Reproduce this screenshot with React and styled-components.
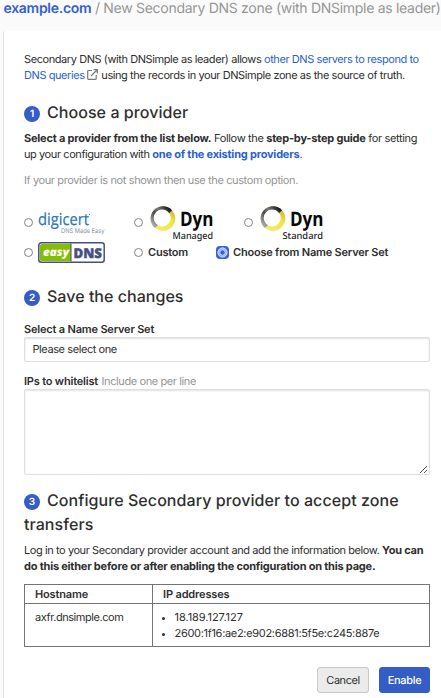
import React from "react";
import styled, { createGlobalStyle } from "styled-components";

const GlobalStyle = createGlobalStyle`
  * { box-sizing: border-box; }
  body {
    margin: 0;
    background: #fafafa;
    color: #2e2e2e;
    font: 11px/16px Inter, "Liberation Sans", sans-serif;
    letter-spacing: -0.42px;
    text-rendering: geometricPrecision;
    overflow: hidden;
  }
  b {
    letter-spacing: -0.21px;
  }
`;

const Page = styled.div`
  width: 441px;
  height: 698px;
  display: flex;
  flex-direction: column;
  overflow: hidden;
`;

const TitleBar = styled.header`
  height: 31px;
  flex: none;
  padding: 0 0 0 3.5px;
  font-size: 14px;
  line-height: 18px;
  letter-spacing: -0.29px;
  color: #969696;
  white-space: nowrap;
`;

const SiteLink = styled.a`
  color: #3360cc;
  font-weight: 600;
`;

const Card = styled.main`
  flex: 1;
  margin-left: 3px;
  padding: 20px 11px 0 20px;
  border-left: 1px solid #e2e2e2;
  border-top-left-radius: 3px;
  background: #fff;
`;

const Copy = styled.p`
  margin: 0 0 ${(p) => p.$after || 0}px;
  color: ${(p) => (p.$muted ? "#949494" : "inherit")};
`;

const Line = styled.span`
  display: block;
  height: 16px;
  white-space: nowrap;
  letter-spacing: ${(p) => p.$track || -0.42}px;
`;

const Link = styled.a`
  color: #2b5fd0;
`;

const ExternalIcon = styled.svg`
  width: 11px;
  height: 11px;
  margin: 0 3px 0 0;
  vertical-align: -1px;
`;

const Heading = styled.h2`
  margin: 0 0 ${(p) => p.$after || 6}px;
  font-size: 16px;
  line-height: 24px;
  font-weight: 500;
  letter-spacing: ${(p) => p.$track || 0}px;
  white-space: nowrap;
`;

const Step = styled.span`
  display: inline-flex;
  align-items: center;
  justify-content: center;
  width: 16px;
  height: 16px;
  margin-right: 7px;
  border-radius: 50%;
  background: #355dc6;
  color: #fff;
  font-size: 10px;
  line-height: 16px;
  font-weight: 600;
  letter-spacing: 0;
  vertical-align: 1.5px;
`;

const Providers = styled.div`
  display: grid;
  grid-template-columns: 110px 82px 28px 1fr;
  grid-template-rows: 36px 22px;
  height: 79px;
  align-content: start;
`;

const Option = styled.label`
  display: flex;
  align-items: ${(p) => (p.$top ? "flex-start" : "center")};
  font-weight: 600;
  letter-spacing: -0.21px;
  white-space: nowrap;
  grid-column: ${(p) => p.$col};
`;

const Radio = styled.span`
  flex: none;
  width: 9px;
  height: 9px;
  margin: ${(p) => p.$top || 0}px 5px 0 0;
  border: 1px solid #828282;
  border-radius: 50%;
  background: #fff;
`;

const Logo = styled.svg`
  flex: none;
  overflow: visible;
  letter-spacing: 0;
  margin-right: ${(p) => p.$gap || 0}px;
`;

const Label = styled.label`
  display: block;
  height: 16px;
  font-weight: 600;
  letter-spacing: -0.19px;
`;

const Hint = styled.span`
  margin-left: 1px;
  font-weight: 400;
  letter-spacing: -0.4px;
  color: #949494;
`;

const Field = styled.div`
  height: 25px;
  margin-bottom: 11px;
  padding: 3px 7.5px;
  border: 1px solid #dfdfdf;
  border-radius: 2px;
  box-shadow: inset 0 1px 2px rgba(0, 0, 0, 0.12);
`;

const TextBox = styled.div`
  display: flex;
  align-items: flex-end;
  justify-content: flex-end;
  height: 86px;
  margin-bottom: 13px;
  border: 1px solid #dfdfdf;
  border-radius: 2px;
  box-shadow: inset 0 1px 2px rgba(0, 0, 0, 0.12);
`;

const Table = styled.div`
  display: grid;
  grid-template-columns: 127px 1fr;
  grid-template-rows: 18px 42px;
  gap: 1px;
  padding: 1px;
  margin-top: 10px;
  background: #747474;
`;

const Cell = styled.div`
  padding: ${(p) => (p.$head ? "1px 10px 0" : "5px 10px 0")};
  background: #fff;
  font-weight: ${(p) => (p.$head ? 600 : 400)};
  letter-spacing: ${(p) => (p.$head ? -0.15 : -0.44)}px;
  white-space: nowrap;
`;

const Addresses = styled.ul`
  margin: 0;
  padding: 0;
  list-style: none;
`;

const Address = styled.li`
  display: flex;
  align-items: center;
  height: 16px;
  margin-left: -1.5px;
  letter-spacing: ${(p) => p.$track || 0}px;
  &::before {
    content: "";
    width: 3px;
    height: 3px;
    margin: 2px 10px 0 0;
    border-radius: 50%;
    background: #2e2e2e;
  }
`;

const Actions = styled.div`
  display: flex;
  justify-content: flex-end;
  gap: 10px;
  margin-top: 20px;
`;

const Button = styled.button`
  width: ${(p) => (p.$primary ? 51 : 52)}px;
  height: 26px;
  padding: 0;
  border: 1px solid ${(p) => (p.$primary ? "#355dc6" : "#c9c9c9")};
  border-radius: 3px;
  background: ${(p) => (p.$primary ? "#355dc6" : "#ebebeb")};
  color: ${(p) => (p.$primary ? "#fff" : "#2e2e2e")};
  font: ${(p) => (p.$primary ? 500 : 400)} 11px/16px Inter, sans-serif;
  letter-spacing: ${(p) => (p.$primary ? -0.3 : -0.45)}px;
  text-rendering: geometricPrecision;
`;

const DynLogo = ({ id, name }) => (
  <Logo width="65" height="36" viewBox="0 0 65 36">
    <defs>
      <linearGradient id={`${id}-dark`} x1="0.1" y1="0.8" x2="0.9" y2="0.1">
        <stop offset="0" stopColor="#a5a5a5" />
        <stop offset="0.35" stopColor="#4a4a4a" />
        <stop offset="0.6" stopColor="#777" />
        <stop offset="1" stopColor="#111" />
      </linearGradient>
      <linearGradient id={`${id}-light`} x1="1" y1="0" x2="0" y2="1">
        <stop offset="0" stopColor="#a39a3c" />
        <stop offset="0.35" stopColor="#f0e344" />
        <stop offset="1" stopColor="#f4ef80" />
      </linearGradient>
    </defs>
    <circle cx="15" cy="13.6" r="12.3" fill={`url(#${id}-light)`} />
    <path d="M24 5.2A12.3 12.3 0 1 0 7 22.9Z" fill={`url(#${id}-dark)`} />
    <circle cx="14.2" cy="13" r="8.5" fill="#fff" />
    <text x="32" y="21.3" textLength="33.5" lengthAdjust="spacingAndGlyphs" fontFamily="Open Sans" fontSize="20" fontWeight="700" fill="#080808">Dyn</text>
    <text x="24.5" y="34.3" textLength="40.5" lengthAdjust="spacingAndGlyphs" fontFamily="Noto Sans" fontSize="9.5" fontWeight="500" fill="#222">{name}</text>
  </Logo>
);

export default function App() {
  return (
    <>
      <GlobalStyle />
      <Page>
        <TitleBar><SiteLink>example.com</SiteLink> / New Secondary DNS zone (with DNSimple as leader)</TitleBar>
        <Card>
          <Copy $after={17}>
            <Line>Secondary DNS (with DNSimple as leader) allows <Link>other DNS servers to respond to</Link></Line>
            <Line>
              <Link>DNS queries</Link>{" "}
              <ExternalIcon viewBox="0 0 11 11" fill="none" stroke="#777" strokeWidth="1.2">
                <path d="M5 1.5H1.4Q.7 1.5.7 2.2V9.5Q.7 10.3 1.4 10.3H8.5Q9.2 10.3 9.2 9.5V6M4 7L10 1M6.6.7H10.3V4.4" />
              </ExternalIcon>
              using the records in your DNSimple zone as the source of truth.
            </Line>
          </Copy>

          <Heading $track={0.06}><Step>1</Step>Choose a provider</Heading>
          <Copy $after={10}>
            <Line $track={-0.36}><b>Select a provider from the list below.</b> Follow the <b>step-by-step guide</b> for setting</Line>
            <Line>up your configuration with <Link><b>one of the existing providers</b></Link>.</Line>
          </Copy>
          <Copy $muted $after={17}><Line $track={-0.39}>If your provider is not shown then use the custom option.</Line></Copy>

          <Providers>
            <Option $top $col="1">
              <Radio $top={13} />
              <Logo width="67" height="36" viewBox="0 0 67 36">
                <text x="0" y="20" textLength="51" lengthAdjust="spacingAndGlyphs" fontFamily="Open Sans" fontSize="16.5" fontWeight="500" fill="#2876b8" stroke="#2876b8" strokeWidth=".2">digicert</text>
                <circle cx="51.5" cy="9.5" r=".5" fill="#2876b8" />
                <text x="23" y="27.6" textLength="43.5" lengthAdjust="spacingAndGlyphs" fontFamily="Inter" fontSize="6.5" fontWeight="400" fill="#8493a1">DNS Made Easy</text>
              </Logo>
            </Option>
            <Option $top $col="2 / 4"><Radio $top={13} /><DynLogo id="managed" name="Managed" /></Option>
            <Option $top $col="4"><Radio $top={13} /><DynLogo id="standard" name="Standard" /></Option>
            <Option $col="1">
              <Radio />
              <Logo width="67" height="22" viewBox="0 0 67 22">
                <rect x=".8" y="1.8" width="65.4" height="19.4" rx="2.5" fill="#fff" stroke="#445080" strokeWidth="1.5" />
                <path d="M3.5 3H33V20H3.5Q2 20 2 18.5V4.5Q2 3 3.5 3Z" fill="#85bd00" />
                <path d="M33 2.5V20.5" stroke="#445080" />
                <text x="5" y="14.5" textLength="26" lengthAdjust="spacingAndGlyphs" fontFamily="Open Sans" fontStyle="italic" fontSize="11.5" fontWeight="800" fill="#fff">easy</text>
                <text x="35.5" y="16.7" textLength="28.5" lengthAdjust="spacingAndGlyphs" fontFamily="Open Sans" fontSize="13.5" fontWeight="800" fill="#445080" stroke="#445080" strokeWidth=".4">DNS</text>
              </Logo>
            </Option>
            <Option $col="2"><Radio />Custom</Option>
            <Option $col="3 / 5">
              <Logo $gap={4} width="13" height="13" viewBox="0 0 13 13">
                <rect width="13" height="13" rx="4" fill="#345fe0" />
                <circle cx="6.5" cy="6.5" r="4.6" fill="#8eaafa" stroke="#e4edff" />
                <circle cx="6.5" cy="6.5" r="2.7" fill="#345fe0" stroke="#fff" strokeWidth=".7" />
              </Logo>
              <span>Choose from Name Server Set</span>
            </Option>
          </Providers>

          <Heading $after={13} $track={0.03}><Step>2</Step>Save the changes</Heading>
          <Label>Select a Name Server Set</Label>
          <Field>Please select one</Field>
          <Label>IPs to whitelist <Hint>Include one per line</Hint></Label>
          <TextBox>
            <Logo width="9" height="9" viewBox="0 0 9 9" stroke="#555" strokeWidth="1">
              <path d="M0 8L7 1M4 8L7 5" />
            </Logo>
          </TextBox>

          <Heading $track={0.07}><Step>3</Step>Configure Secondary provider to accept zone<br />transfers</Heading>
          <Copy>
            <Line>Log in to your Secondary provider account and add the information below. <b>You can</b></Line>
            <Line><b>do this either before or after enabling the configuration on this page.</b></Line>
          </Copy>
          <Table>
            <Cell $head>Hostname</Cell>
            <Cell $head>IP addresses</Cell>
            <Cell>axfr.dnsimple.com</Cell>
            <Cell>
              <Addresses>
                <Address $track={-0.04}>18.189.127.127</Address>
                <Address $track={-0.31}>2600:1f16:ae2:e902:6881:5f5e:c245:887e</Address>
              </Addresses>
            </Cell>
          </Table>
          <Actions><Button>Cancel</Button><Button $primary>Enable</Button></Actions>
        </Card>
      </Page>
    </>
  );
}
